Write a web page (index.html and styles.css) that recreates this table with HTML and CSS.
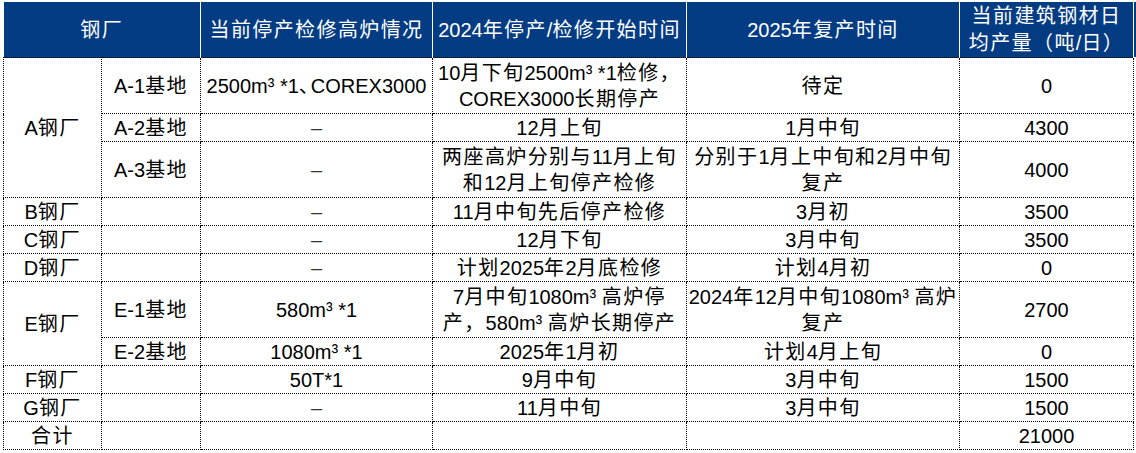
FILE: index.html
```html
<!DOCTYPE html>
<html lang="zh-CN">
<head>
<meta charset="utf-8">
<title>钢厂停产检修情况</title>
<link rel="stylesheet" href="styles.css">
</head>
<body>
<div class="wrap">
<table class="grid">
  <colgroup>
    <col class="c1"><col class="c2"><col class="c3"><col class="c4"><col class="c5"><col class="c6">
  </colgroup>
  <thead>
    <tr class="head">
      <th colspan="2">钢厂</th>
      <th>当前停产检修高炉情况</th>
      <th><span class="n">2024</span>年停产<span class="n">/</span>检修开始时间</th>
      <th><span class="n">2025</span>年复产时间</th>
      <th>当前建筑钢材日<br>均产量（吨<span class="n">/</span>日）</th>
    </tr>
  </thead>
  <tbody>
    <tr class="dbl">
      <td rowspan="3"><span class="n">A</span>钢厂</td>
      <td><span class="n">A-1</span>基地</td>
      <td><span class="n">2500m³ *1</span><span class="pn">、</span><span class="n">COREX3000</span></td>
      <td><span class="n">10</span>月下旬<span class="n">2500m³ *1</span>检修，<br><span class="n">COREX3000</span>长期停产</td>
      <td>待定</td>
      <td class="num">0</td>
    </tr>
    <tr class="sgl">
      <td><span class="n">A-2</span>基地</td>
      <td class="dash">–</td>
      <td><span class="n">12</span>月上旬</td>
      <td><span class="n">1</span>月中旬</td>
      <td class="num">4300</td>
    </tr>
    <tr class="dbl">
      <td><span class="n">A-3</span>基地</td>
      <td class="dash">–</td>
      <td>两座高炉分别与<span class="n">11</span>月上旬<br>和<span class="n">12</span>月上旬停产检修</td>
      <td>分别于<span class="n">1</span>月上中旬和<span class="n">2</span>月中旬<br>复产</td>
      <td class="num">4000</td>
    </tr>
    <tr class="sgl">
      <td><span class="n">B</span>钢厂</td>
      <td></td>
      <td class="dash">–</td>
      <td><span class="n">11</span>月中旬先后停产检修</td>
      <td><span class="n">3</span>月初</td>
      <td class="num">3500</td>
    </tr>
    <tr class="sgl">
      <td><span class="n">C</span>钢厂</td>
      <td></td>
      <td class="dash">–</td>
      <td><span class="n">12</span>月下旬</td>
      <td><span class="n">3</span>月中旬</td>
      <td class="num">3500</td>
    </tr>
    <tr class="sgl">
      <td><span class="n">D</span>钢厂</td>
      <td></td>
      <td class="dash">–</td>
      <td>计划<span class="n">2025</span>年<span class="n">2</span>月底检修</td>
      <td>计划<span class="n">4</span>月初</td>
      <td class="num">0</td>
    </tr>
    <tr class="dbl">
      <td rowspan="2"><span class="n">E</span>钢厂</td>
      <td><span class="n">E-1</span>基地</td>
      <td class="num">580m³ *1</td>
      <td><span class="n">7</span>月中旬<span class="n">1080m³ </span>高炉停<br>产，<span class="n">580m³ </span>高炉长期停产</td>
      <td><span class="n">2024</span>年<span class="n">12</span>月中旬<span class="n">1080m³ </span>高炉<br>复产</td>
      <td class="num">2700</td>
    </tr>
    <tr class="sgl">
      <td><span class="n">E-2</span>基地</td>
      <td class="num">1080m³ *1</td>
      <td><span class="n">2025</span>年<span class="n">1</span>月初</td>
      <td>计划<span class="n">4</span>月上旬</td>
      <td class="num">0</td>
    </tr>
    <tr class="sgl">
      <td><span class="n">F</span>钢厂</td>
      <td></td>
      <td class="num">50T*1</td>
      <td><span class="n">9</span>月中旬</td>
      <td><span class="n">3</span>月中旬</td>
      <td class="num">1500</td>
    </tr>
    <tr class="sgl">
      <td><span class="n">G</span>钢厂</td>
      <td></td>
      <td class="dash">–</td>
      <td><span class="n">11</span>月中旬</td>
      <td><span class="n">3</span>月中旬</td>
      <td class="num">1500</td>
    </tr>
    <tr class="sgl">
      <td>合计</td>
      <td></td>
      <td></td>
      <td></td>
      <td></td>
      <td class="num">21000</td>
    </tr>
  </tbody>
</table>
</div>
</body>
</html>
```

FILE: styles.css
```css
html, body {
  margin: 0;
  padding: 0;
  background: #ffffff;
}

.wrap {
  padding: 2px 0 0 3px;
  background: linear-gradient(#033c83, #033c83) no-repeat right 0 top 2px / 4px 55px;
}

.grid {
  border-collapse: collapse;
  table-layout: fixed;
  width: 1130px;
  font-family: "Liberation Sans", "Noto Sans CJK SC", sans-serif;
  font-size: 20px;
  letter-spacing: 1.4px;
  color: #000;
}

.c1 { width: 98px; }
.c2 { width: 99px; }
.c3 { width: 232px; }
.c4 { width: 254px; }
.c5 { width: 273px; }
.c6 { width: 174px; }

.grid th {
  background: #033c83;
  color: #ffffff;
  font-weight: normal;
  padding: 1px 0 0 0;
  line-height: 27px;
  border-left: 1px solid #ffffff;
  border-right: 1px solid #ffffff;
  text-align: center;
  white-space: nowrap;
}

.grid th:first-child {
  border-left: none;
}

.head {
  height: 55px;
}

.grid td {
  border: 1px dotted #000;
  padding: 0;
  text-align: center;
  vertical-align: middle;
  line-height: 26px;
  white-space: nowrap;
}

.n,
.num {
  letter-spacing: 0;
}

.pn {
  letter-spacing: -8px;
}

.sgl {
  height: 28px;
}

.dbl {
  height: 56px;
}

.dash {
  color: #333;
  letter-spacing: 0;
}
```
